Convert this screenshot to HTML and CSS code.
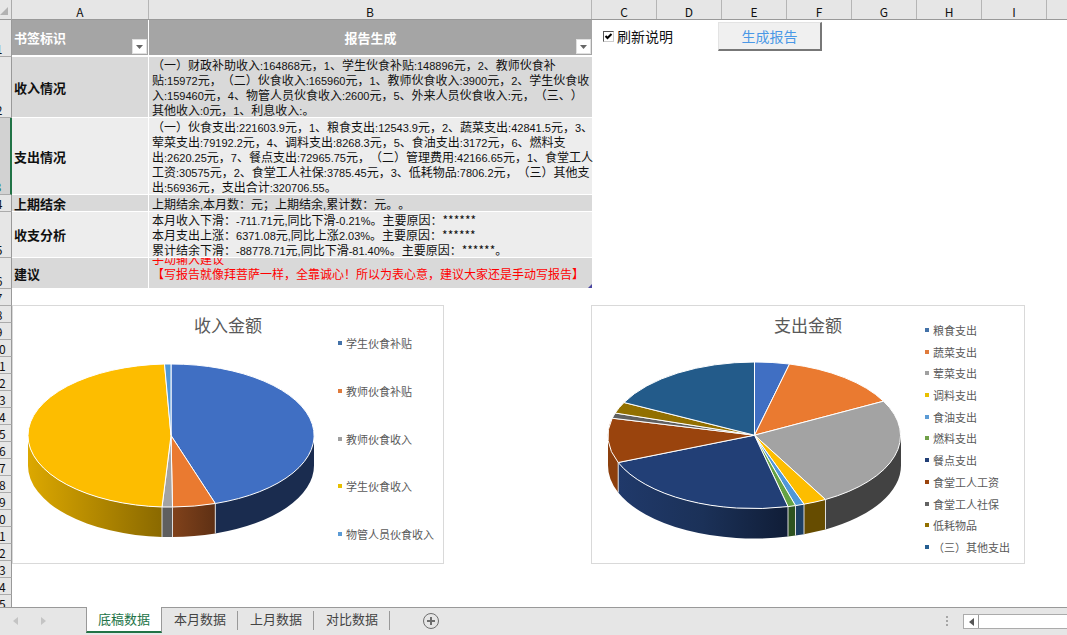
FILE: index.html
```html
<!DOCTYPE html>
<html lang="zh-CN">
<head>
<meta charset="utf-8">
<title>底稿数据</title>
<link rel="stylesheet" href="styles.css">
</head>
<body>
<div class="app">
  <div class="sheet">
    <div class="row-heads">
      <div class="corner"><svg width="9" height="9" viewBox="0 0 9 9"><path d="M8 0V8H0Z" fill="#b2b2b2"/></svg></div>
      <div class="rh r1"><span>1</span></div>
      <div class="rh r2"><span>2</span></div>
      <div class="rh r3 selected"><span>3</span></div>
      <div class="rh"><span>4</span></div>
      <div class="rh r5"><span>5</span></div>
      <div class="rh r6"><span>6</span></div>
      <div class="rh"><span>7</span></div>
      <div class="rh"><span>8</span></div>
      <div class="rh"><span>9</span></div>
      <div class="rh"><span>10</span></div>
      <div class="rh"><span>11</span></div>
      <div class="rh"><span>12</span></div>
      <div class="rh"><span>13</span></div>
      <div class="rh"><span>14</span></div>
      <div class="rh"><span>15</span></div>
      <div class="rh"><span>16</span></div>
      <div class="rh"><span>17</span></div>
      <div class="rh"><span>18</span></div>
      <div class="rh"><span>19</span></div>
      <div class="rh"><span>20</span></div>
      <div class="rh"><span>21</span></div>
      <div class="rh"><span>22</span></div>
      <div class="rh"><span>23</span></div>
      <div class="rh"><span>24</span></div>
      <div class="rh"><span>25</span></div>
    </div>
    <div class="canvas">
      <div class="col-heads">
        <span class="ch col-a">A</span><span class="ch col-b">B</span><span class="ch">C</span><span class="ch">D</span><span class="ch">E</span><span class="ch">F</span><span class="ch">G</span><span class="ch">H</span><span class="ch">I</span>
      </div>
      <div class="top">
        <table class="report">
          <colgroup><col class="c-key"><col class="c-text"></colgroup>
          <thead>
            <tr>
              <th class="key">书签标识<button class="filter" type="button" aria-label="筛选书签标识"><svg width="7" height="4" viewBox="0 0 7 4"><path d="M0 0H7L3.500 4Z" fill="#666"/></svg></button></th>
              <th>报告生成<button class="filter" type="button" aria-label="筛选报告生成"><svg width="7" height="4" viewBox="0 0 7 4"><path d="M0 0H7L3.500 4Z" fill="#666"/></svg></button></th>
            </tr>
          </thead>
          <tbody>
            <tr class="t2 dark">
              <th class="key" scope="row">收入情况</th>
              <td>（一）财政补助收入<i>:164868</i>元，<i>1</i>、学生伙食补贴<i>:148896</i>元，<i>2</i>、教师伙食补<br>贴<i>:15972</i>元，（二）伙食收入<i>:165960</i>元，<i>1</i>、教师伙食收入<i>:3900</i>元，<i>2</i>、学生伙食收<br>入<i>:159460</i>元，<i>4</i>、物管人员伙食收入<i>:2600</i>元，<i>5</i>、外来人员伙食收入<i>:</i>元，（三、）<br>其他收入<i>:0</i>元，<i>1</i>、利息收入<i>:</i>。</td>
            </tr>
            <tr class="t3">
              <th class="key" scope="row">支出情况</th>
              <td>（一）伙食支出<i>:221603.9</i>元，<i>1</i>、粮食支出<i>:12543.9</i>元，<i>2</i>、蔬菜支出<i>:42841.5</i>元，<i>3</i>、<br>荤菜支出<i>:79192.2</i>元，<i>4</i>、调料支出<i>:8268.3</i>元，<i>5</i>、食油支出<i>:3172</i>元，<i>6</i>、燃料支<br>出<i>:2620.25</i>元，<i>7</i>、餐点支出<i>:72965.75</i>元，（二）管理费用<i>:42166.65</i>元，<i>1</i>、食堂工人<br>工资<i>:30575</i>元，<i>2</i>、食堂工人社保<i>:3785.45</i>元，<i>3</i>、低耗物品<i>:7806.2</i>元，（三）其他支<br>出<i>:56936</i>元，支出合计<i>:320706.55</i>。</td>
            </tr>
            <tr class="t4 dark">
              <th class="key" scope="row">上期结余</th>
              <td>上期结余<i>,</i>本月数：元；上期结余<i>,</i>累计数：元。。</td>
            </tr>
            <tr class="t5">
              <th class="key" scope="row">收支分析</th>
              <td>本月收入下滑：<i>-711.71</i>元<i>,</i>同比下滑<i>-0.21%</i>。主要原因：******<br>本月支出上涨：<i>6371.08</i>元<i>,</i>同比上涨<i>2.03%</i>。主要原因：******<br>累计结余下滑：<i>-88778.71</i>元<i>,</i>同比下滑<i>-81.40%</i>。主要原因：******。</td>
            </tr>
            <tr class="t6 dark">
              <th class="key" scope="row">建议</th>
              <td><div class="advice"><p>手动输入建议</p><p>【写报告就像拜菩萨一样，全靠诚心！所以为表心意，建议大家还是手动写报告】</p><p></p></div><svg class="resizer" width="4" height="4" viewBox="0 0 4 4"><path d="M4 0V4H0Z" fill="#4a46a0"/></svg></td>
            </tr>
          </tbody>
        </table>
        <div class="controls">
          <label class="check"><input type="checkbox" checked><span>刷新说明</span></label>
          <button class="make" type="button">生成报告</button>
        </div>
      </div>
      <div class="charts">
        <section class="chart">
          <h2>收入金额</h2>
          <svg class="pie" viewBox="13 344 318 218" width="318" height="218">
            <defs>
              <linearGradient id="gy"><stop offset="0" stop-color="#dca800"/><stop offset="1" stop-color="#8a6900"/></linearGradient>
              <linearGradient id="go"><stop offset="0" stop-color="#81421b"/><stop offset="1" stop-color="#5e3014"/></linearGradient>
            </defs>
            <g>
              <path fill="url(#gy)" d="M28 435.500V465.500A143 71.500 0 0 0 162 537V507A143 71.500 0 0 1 28 435.500Z"/>
              <path fill="#5f5f5f" d="M162 507H172.500V537H162Z"/>
              <path fill="url(#go)" d="M172.500 507V537A143 71.500 0 0 0 215.300 533.500V503.500Z"/>
              <path fill="#1a2c4f" d="M215.300 503.500V533.500A143 71.500 0 0 0 314 465.500V435.500Z"/>
            </g>
            <g stroke="#fff" stroke-width="1" stroke-linejoin="round">
              <path fill="#406fc3" d="M171 435.500V364A143 71.500 0 0 1 215.300 503.500Z"/>
              <path fill="#ea7a30" d="M171 435.500L215.300 503.500A143 71.500 0 0 1 172.500 507Z"/>
              <path fill="#a3a3a3" d="M171 435.500L172.500 507H162Z"/>
              <path fill="#fdbd00" d="M171 435.500L162 507A143 71.500 0 0 1 28 435.500A143 71.500 0 0 1 164.500 364Z"/>
              <path fill="#5098d8" d="M171 435.500L164.500 364H171Z"/>
              <path fill="none" stroke="#ddd" d="M162 507V537M172.500 507V537M215.300 503.500V533.500"/>
            </g>
          </svg>
          <ul class="legend">
            <li class="blue">学生伙食补贴</li>
            <li class="orange">教师伙食补贴</li>
            <li class="gray">教师伙食收入</li>
            <li class="yellow">学生伙食收入</li>
            <li class="sky">物管人员伙食收入</li>
          </ul>
        </section>
        <section class="chart spending">
          <h2>支出金额</h2>
          <svg class="pie" viewBox="592 344 326 218" width="326" height="218">
            <defs>
              <linearGradient id="gn"><stop offset="0" stop-color="#20396a"/><stop offset=".5" stop-color="#1b3158"/><stop offset="1" stop-color="#101d37"/></linearGradient>
            </defs>
            <g>
              <path fill="#8c3f0d" d="M608 435.200V465.200A146.500 73.300 0 0 0 618.200 492.500V462.500Z"/>
              <path fill="url(#gn)" d="M618.200 462.500V492.500A146.500 73.300 0 0 0 788 536.600V506.600A146.500 73.300 0 0 1 618.200 462.500Z"/>
              <path fill="#2e5320" d="M788 506.600L795.500 505.600V535.600L788 536.600Z"/>
              <path fill="#1d3f63" d="M795.500 505.600L804 504.200V534.200L795.500 535.600Z"/>
              <path fill="#664c00" d="M804 504.200L825.500 499.500V529.500L804 534.200Z"/>
              <path fill="#424242" d="M825.500 499.500V529.500A146.500 73.300 0 0 0 901 465.200V435.200Z"/>
            </g>
            <g stroke="#fff" stroke-width="1" stroke-linejoin="round">
              <path fill="#406fc3" d="M754.500 435.200V362A146.500 73.300 0 0 1 789.500 364Z"/>
              <path fill="#ea7a30" d="M754.500 435.200L789.500 364A146.500 73.300 0 0 1 883.500 401.200Z"/>
              <path fill="#a3a3a3" d="M754.500 435.200L883.500 401.200A146.500 73.300 0 0 1 825.500 499.500Z"/>
              <path fill="#fdbd00" d="M754.500 435.200L825.500 499.500A146.500 73.300 0 0 1 804 504.200Z"/>
              <path fill="#5098d8" d="M754.500 435.200L804 504.200L795.500 505.600Z"/>
              <path fill="#65a244" d="M754.500 435.200L795.500 505.600L788 506.600Z"/>
              <path fill="#223f76" d="M754.500 435.200L788 506.600A146.500 73.300 0 0 1 618.200 462.500Z"/>
              <path fill="#9a440d" d="M754.500 435.200L618.200 462.500A146.500 73.300 0 0 1 612.200 418.200Z"/>
              <path fill="#606060" d="M754.500 435.200L612.200 418.200L615.200 413Z"/>
              <path fill="#927000" d="M754.500 435.200L615.200 413A146.500 73.300 0 0 1 624 402.500Z"/>
              <path fill="#235b8a" d="M754.500 435.200L624 402.500A146.500 73.300 0 0 1 754.500 362Z"/>
              <path fill="none" stroke="#ddd" d="M618.200 462.500V492.500M788 506.600V536.600M795.500 505.600V535.600M804 504.200V534.200M825.500 499.500V529.500"/>
            </g>
          </svg>
          <ul class="legend">
            <li class="blue">粮食支出</li>
            <li class="orange">蔬菜支出</li>
            <li class="gray">荤菜支出</li>
            <li class="yellow">调料支出</li>
            <li class="sky">食油支出</li>
            <li class="green">燃料支出</li>
            <li class="navy">餐点支出</li>
            <li class="brown">食堂工人工资</li>
            <li class="slate">食堂工人社保</li>
            <li class="olive">低耗物品</li>
            <li class="teal">（三）其他支出</li>
          </ul>
        </section>
      </div>
    </div>
  </div>
  <div class="tabbar">
    <div class="arrows">
      <button type="button" aria-label="上一个"><svg width="5" height="8" viewBox="0 0 5 8"><path d="M5 0V8L0 4Z" fill="#c4c4c4"/></svg></button>
      <button type="button" aria-label="下一个"><svg width="5" height="8" viewBox="0 0 5 8"><path d="M0 0V8L5 4Z" fill="#c4c4c4"/></svg></button>
    </div>
    <nav class="tabs">
      <button class="tab active" type="button">底稿数据</button>
      <button class="tab" type="button">本月数据</button>
      <button class="tab" type="button">上月数据</button>
      <button class="tab" type="button">对比数据</button>
    </nav>
    <button class="add" type="button" aria-label="新工作表"><svg width="18" height="18" viewBox="0 0 18 18" fill="none" stroke="#6e6e6e"><circle cx="9" cy="9" r="7.500"/><path stroke-width="2" d="M9 5V13M5 9H13"/></svg></button>
    <svg class="grip" width="4" height="12" viewBox="0 0 4 12" fill="#a6a6a6"><path d="M1 1h2v2h-2zM1 5h2v2h-2zM1 9h2v2h-2z"/></svg>
    <div class="scroll"><button type="button" aria-label="向左滚动"><svg width="5" height="8" viewBox="0 0 5 8"><path d="M5 0V8L0 4Z" fill="#555"/></svg></button><div class="thumb"></div></div>
  </div>
</div>
</body>
</html>
```
FILE: styles.css
```css
* { box-sizing: border-box; }
body {
  margin: 0;
  background: #fff;
  color: #111;
  font: 12px/15px "Noto Sans CJK SC", sans-serif;
  text-spacing-trim: space-all;
}
button { margin: 0; padding: 0; border: 0; background: none; font: inherit; color: inherit; }
svg { display: block; }

.app { display: flex; flex-direction: column; height: 100vh; overflow: hidden; }
.sheet { display: flex; flex: 1; min-height: 0; overflow: hidden; }

/* headings */
.row-heads { flex: 0 0 12px; overflow: hidden; background: #e6e6e6; }
.corner {
  display: flex; align-items: flex-end; height: 20px; padding-bottom: 3px;
  border-right: 1px solid #ababab; border-bottom: 1px solid #999;
}
.rh {
  display: flex; justify-content: flex-end; align-items: flex-end;
  height: 17px; overflow: hidden;
  border-right: 1px solid #999; border-bottom: 1px solid #ababab;
}
.rh span { flex: 0 0 24px; text-align: center; line-height: 14px; }
.r1 { height: 37px; }
.r2 { height: 61px; }
.r3 { height: 77px; }
.r5 { height: 46px; }
.r6 { height: 31px; }
.selected { background: #d2d2d2; border-right: 2px solid #217346; color: #217346; }

.canvas { flex: 1; min-width: 0; }
.col-heads {
  display: flex; height: 20px; overflow: hidden;
  background: #e6e6e6; border-bottom: 1px solid #999;
}
.ch {
  flex: 0 0 65px; padding-top: 4px; border-right: 1px solid #b5b5b5;
  line-height: 16px; text-align: center;
}
.col-a { flex-basis: 137px; }
.col-b { flex-basis: 443px; }

/* report table */
.top { display: flex; align-items: flex-start; }
.report { flex: none; width: 580px; table-layout: fixed; border-collapse: separate; border-spacing: 0; }
.c-key { width: 137px; }
.c-text { width: 443px; }
.report th, .report td {
  position: relative; padding: 0 3px; background: #ededed;
  border-bottom: 1px solid #fff; text-align: left; vertical-align: middle; white-space: nowrap;
}
.report .key { padding: 0 2px; border-right: 1px solid #fff; font-size: 13px; font-weight: 700; }
.report .dark th, .report .dark td { background: #d9d9d9; }
.report thead th {
  height: 37px; background: #a5a5a5; border-bottom: 2px solid #fff;
  color: #fff; font-size: 13px; font-weight: 700; text-align: center;
}
.report thead .key { text-align: left; }
.t2 { height: 61px; }
.t3 { height: 77px; }
.t4 { height: 17px; }
.t5 { height: 46px; }
.t6 { height: 31px; }
.report i { font: normal 11px/11px "Liberation Sans", sans-serif; }
.filter {
  position: absolute; right: 1px; bottom: 1px; display: grid; place-items: center;
  width: 15px; height: 15px; background: #fff; border: 1px solid #e0e0e0;
}
.advice { display: flex; flex-direction: column; justify-content: center; height: 30px; overflow: hidden; color: #f00; }
.advice p { flex: 0 0 15px; margin: 0; }
.resizer { position: absolute; right: 0; bottom: 0; }

.controls { display: flex; align-items: center; gap: 45px; padding: 2px 0 0 11px; }
.check { display: flex; align-items: center; gap: 3px; font-size: 14px; }
.check input {
  appearance: none; width: 11px; height: 11px; margin: 0; background: #fff
    url("data:image/svg+xml,%3Csvg xmlns='http://www.w3.org/2000/svg' viewBox='0 0 9 9'%3E%3Cpath d='M1.500 4L3.500 6L7.500 2' fill='none' stroke='%23000' stroke-width='2'/%3E%3C/svg%3E");
  border: 1px solid; border-color: #555 #ccc #ccc #555;
}
.make {
  width: 104px; height: 29px; background: #f0f0f0; color: #4a98e6; font-size: 14px;
  border: solid; border-width: 1px 2px 2px 1px; border-color: #e3e3e3 #777 #777 #e3e3e3;
}

/* charts */
.charts { display: flex; gap: 147px; padding-top: 16px; }
.chart {
  flex: 0 0 432px; display: grid; grid-template: 38px 219px / 325px 1fr;
  border: 1px solid #d9d9d9; color: #595959;
}
.chart.spending { flex-basis: 434px; grid-template-columns: 333px 1fr; }
.chart h2 {
  grid-area: 1 / 1 / 2 / 3; margin: 0; font-size: 17px; line-height: 38px;
  font-weight: 400; text-align: center;
}
.pie { grid-area: 2 / 1; }
.legend {
  grid-area: 1 / 2 / 3 / 3; display: flex; flex-direction: column; justify-content: space-between;
  margin: 0; padding: 29px 0 21px; list-style: none; font-size: 11px; line-height: 16px;
}
.spending .legend { padding: 16px 0 8px; }
.legend li { display: flex; align-items: center; gap: 4px; white-space: nowrap; }
.legend li::before { content: ""; width: 4px; height: 4px; background: currentColor; }
.blue::before { color: #4472a8; }
.orange::before { color: #e07b3c; }
.gray::before { color: #a0a0a0; }
.yellow::before { color: #e8c000; }
.sky::before { color: #5b9bd5; }
.green::before { color: #70a048; }
.navy::before { color: #223f76; }
.brown::before { color: #9a440d; }
.slate::before { color: #636363; }
.olive::before { color: #927000; }
.teal::before { color: #255e91; }

/* sheet tabs */
.tabbar {
  display: flex; flex: 0 0 28px; align-items: flex-start;
  background: #e6e6e6; border-top: 1px solid #999;
}
.arrows { display: flex; gap: 23px; flex: 0 0 86px; padding: 9px 0 0 13px; }
.tabs { display: flex; margin-top: -1px; }
.tab { position: relative; width: 76px; height: 26px; padding-bottom: 3px; color: #444; font-size: 13px; }
.tab::after { content: ""; position: absolute; right: 0; top: 4px; width: 1px; height: 19px; background: #999; }
.tab.active { background: #fff; border: 1px solid #999; border-width: 0 1px 2px; border-bottom-color: #217346; padding-bottom: 1px; color: #217346; }
.tab.active::after { display: none; }
.add { margin: 4px auto 0 32px; }
.grip { margin: 7px 14px 0 0; }
.scroll { display: flex; flex: 0 0 104px; height: 15px; margin-top: 6px; background: #fff; border: 1px solid #ababab; border-right: 0; }
.scroll button { display: grid; place-items: center; width: 14px; }
.thumb { flex: 1; border-left: 1px solid #999; }
```
